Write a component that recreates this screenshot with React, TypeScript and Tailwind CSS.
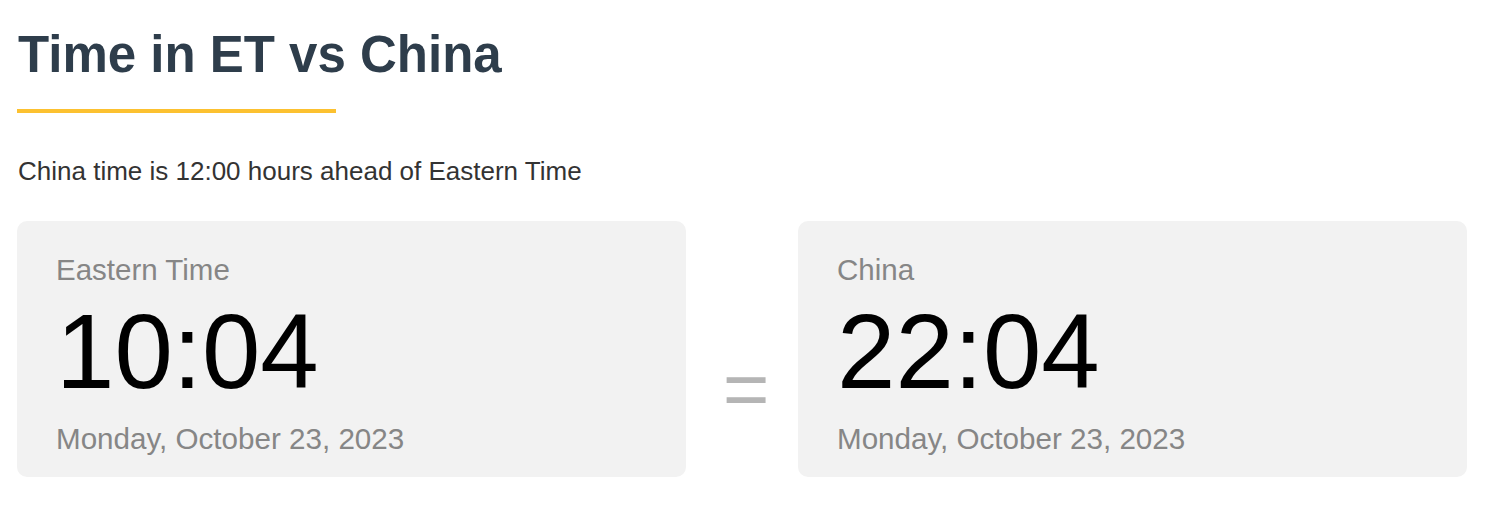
import React from 'react';

interface ClockCardProps {
  label: string;
  time: string;
  date: string;
}

const ClockCard: React.FC<ClockCardProps> = ({ label, time, date }) => (
  <div className="flex-1 flex flex-col bg-[#f2f2f2] rounded-[10px] pl-[39px] pt-[34px] pb-[24px]">
    <div className="text-[29.5px] leading-none text-[#868686]">{label}</div>
    <div className="mt-[14px] text-[105px] leading-none text-black">{time}</div>
    <div className="mt-[20px] text-[29.6px] leading-none text-[#868686]">{date}</div>
  </div>
);

export default function App() {
  return (
    <div className="min-h-screen bg-white px-[17px] pt-[29px] font-['Liberation_Sans',Arial,sans-serif]">
      {/* Header */}
      <h1 className="pl-px text-[51px] leading-none font-bold text-[#2e3d4b]">Time in ET vs China</h1>
      <div className="mt-[29px] w-[319px] h-[4px] bg-[#fcc130]" />

      <p className="pl-px mt-[45px] text-[26px] leading-none text-[#333333]">
        China time is 12:00 hours ahead of Eastern Time
      </p>

      {/* Clocks */}
      <div className="mt-[37px] flex items-stretch w-[1450px]">
        <ClockCard label="Eastern Time" time="10:04" date="Monday, October 23, 2023" />
        <div className="w-[112px] flex items-center justify-center pt-[80px] pl-[8px]">
          <span className="text-[80px] leading-none text-[#b5b5b5]">=</span>
        </div>
        <ClockCard label="China" time="22:04" date="Monday, October 23, 2023" />
      </div>
    </div>
  );
}
